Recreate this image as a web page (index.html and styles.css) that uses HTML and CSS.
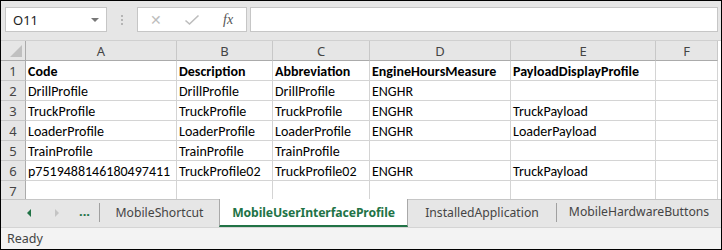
FILE: index.html
```html
<!DOCTYPE html>
<html lang="en">
<head>
  <meta charset="UTF-8">
  <title>MobileUserInterfaceProfile</title>
  <link rel="stylesheet" href="styles.css">
</head>
<body>
  <div class="window">
    <div class="formula-bar">
      <div class="name-box">
        <span>O11</span>
        <span class="caret"></span>
      </div>
      <div class="grip"><i></i><i></i><i></i></div>
      <div class="fx-buttons">
        <span class="fx-cancel">&#x2715;</span>
        <svg class="fx-enter" width="16" height="12" viewBox="0 0 16 12"><path d="M1.5 6.5 L5.5 10 L14.5 1.5" fill="none" stroke="#bdbdbd" stroke-width="1.6"/></svg>
        <span class="fx-label">fx</span>
      </div>
      <div class="formula-input"></div>
    </div>

    <div class="sheet">
      <div class="corner"><span class="corner-tri"></span></div>
      <div class="col-head">A</div>
      <div class="col-head">B</div>
      <div class="col-head">C</div>
      <div class="col-head">D</div>
      <div class="col-head">E</div>
      <div class="col-head">F</div>

      <div class="row-head">1</div>
      <div class="cell bold">Code</div>
      <div class="cell bold">Description</div>
      <div class="cell bold">Abbreviation</div>
      <div class="cell bold">EngineHoursMeasure</div>
      <div class="cell bold">PayloadDisplayProfile</div>
      <div class="cell"></div>

      <div class="row-head">2</div>
      <div class="cell">DrillProfile</div>
      <div class="cell">DrillProfile</div>
      <div class="cell">DrillProfile</div>
      <div class="cell">ENGHR</div>
      <div class="cell"></div>
      <div class="cell"></div>

      <div class="row-head">3</div>
      <div class="cell">TruckProfile</div>
      <div class="cell">TruckProfile</div>
      <div class="cell">TruckProfile</div>
      <div class="cell">ENGHR</div>
      <div class="cell">TruckPayload</div>
      <div class="cell"></div>

      <div class="row-head">4</div>
      <div class="cell">LoaderProfile</div>
      <div class="cell">LoaderProfile</div>
      <div class="cell">LoaderProfile</div>
      <div class="cell">ENGHR</div>
      <div class="cell">LoaderPayload</div>
      <div class="cell"></div>

      <div class="row-head">5</div>
      <div class="cell">TrainProfile</div>
      <div class="cell">TrainProfile</div>
      <div class="cell">TrainProfile</div>
      <div class="cell"></div>
      <div class="cell"></div>
      <div class="cell"></div>

      <div class="row-head">6</div>
      <div class="cell">p7519488146180497411</div>
      <div class="cell">TruckProfile02</div>
      <div class="cell">TruckProfile02</div>
      <div class="cell">ENGHR</div>
      <div class="cell">TruckPayload</div>
      <div class="cell"></div>

      <div class="row-head">7</div>
      <div class="cell"></div>
      <div class="cell"></div>
      <div class="cell"></div>
      <div class="cell"></div>
      <div class="cell"></div>
      <div class="cell"></div>
    </div>

    <div class="tab-bar">
      <div class="tab-nav">
        <span class="nav-prev"></span>
        <span class="nav-next"></span>
        <span class="nav-more">...</span>
      </div>
      <div class="tab">MobileShortcut</div>
      <div class="tab active">MobileUserInterfaceProfile</div>
      <div class="tab">InstalledApplication</div>
      <div class="tab last">MobileHardwareButtons</div>
    </div>

    <div class="status-bar">Ready</div>
  </div>
</body>
</html>
```

FILE: styles.css
```css
:root {
  --chrome: #e6e6e6;
  --status: #f3f3f3;
  --grid: #d4d4d4;
  --head-line: #ababab;
  --head-text: #444444;
  --green: #217346;
}

* {
  margin: 0;
  padding: 0;
  box-sizing: border-box;
}

body {
  width: 722px;
  height: 250px;
  overflow: hidden;
  font-family: "Noto Sans", "Open Sans", sans-serif;
  background: #ffffff;
}

.window {
  width: 722px;
  height: 250px;
  border: 1px solid #000000;
  background: var(--chrome);
  display: flex;
  flex-direction: column;
  overflow: hidden;
}

/* formula bar */

.formula-bar {
  height: 40px;
  display: flex;
  align-items: flex-start;
  padding: 6px 3px 0 4px;
  border-bottom: 1px solid #d0d0d0;
}

.name-box {
  width: 102px;
  height: 25px;
  background: #ffffff;
  border: 1px solid #c6c6c6;
  display: flex;
  align-items: center;
  justify-content: space-between;
  padding: 0 7px 0 7px;
  font-size: 13px;
  color: #222222;
}

.caret {
  width: 0;
  height: 0;
  border-left: 4px solid transparent;
  border-right: 4px solid transparent;
  border-top: 4px solid #777777;
}

.grip {
  width: 30px;
  height: 25px;
  display: flex;
  flex-direction: column;
  align-items: center;
  justify-content: center;
  gap: 2px;
}

.grip i {
  display: block;
  width: 2px;
  height: 2px;
  background: #b5b5b5;
}

.fx-buttons {
  width: 110px;
  height: 25px;
  background: #ffffff;
  border: 1px solid #c6c6c6;
  display: flex;
  align-items: center;
  padding: 0 0 0 12px;
}

.fx-cancel {
  width: 30px;
  color: #bdbdbd;
  font-size: 14px;
}

.fx-enter {
  margin: 0 0 0 4px;
}

.fx-label {
  margin-left: 23px;
  font-family: "Liberation Serif", serif;
  font-style: italic;
  font-size: 14px;
  color: #555555;
}

.formula-input {
  flex: 1;
  height: 25px;
  margin-left: 3px;
  background: #ffffff;
  border: 1px solid #c6c6c6;
}

/* grid */

.sheet {
  height: 158px;
  display: grid;
  grid-template-columns: 25px 151px 96px 97px 141px 145px 62px;
  grid-auto-rows: 20px;
  background: #ffffff;
  overflow: hidden;
}

.corner {
  background: var(--chrome);
  border-right: 1px solid var(--head-line);
  border-bottom: 1px solid var(--head-line);
  position: relative;
}

.corner-tri {
  position: absolute;
  right: 3px;
  bottom: 3px;
  width: 0;
  height: 0;
  border-left: 12px solid transparent;
  border-bottom: 12px solid #c0c0c0;
}

.col-head {
  background: var(--chrome);
  border-right: 1px solid #c8c8c8;
  border-bottom: 1px solid var(--head-line);
  color: var(--head-text);
  font-size: 13px;
  text-align: center;
  line-height: 20px;
}

.row-head {
  background: var(--chrome);
  border-right: 1px solid var(--head-line);
  border-bottom: 1px solid #c8c8c8;
  color: var(--head-text);
  font-size: 13px;
  text-align: center;
  line-height: 20px;
}

.cell {
  border-right: 1px solid var(--grid);
  border-bottom: 1px solid var(--grid);
  font-family: Calibri, Carlito, Lato, sans-serif;
  font-size: 14px;
  line-height: 16px;
  padding: 3px 0 0 2px;
  color: #000000;
  white-space: nowrap;
  overflow: visible;
}

.cell.bold {
  font-weight: 700;
}

/* sheet tabs */

.tab-bar {
  height: 28px;
  display: flex;
  align-items: stretch;
  border-top: 1px solid #c6c6c6;
  background: var(--chrome);
}

.tab-nav {
  width: 99px;
  display: flex;
  align-items: center;
  padding-left: 26px;
  border-right: 1px solid #a0a0a0;
  margin: 3px 0 5px 0;
}

.nav-prev {
  width: 0;
  height: 0;
  border-top: 4px solid transparent;
  border-bottom: 4px solid transparent;
  border-right: 4px solid var(--green);
}

.nav-next {
  margin-left: 24px;
  width: 0;
  height: 0;
  border-top: 4px solid transparent;
  border-bottom: 4px solid transparent;
  border-left: 4px solid #c4c4c4;
}

.nav-more {
  margin-left: 20px;
  color: var(--green);
  font-weight: 700;
  font-size: 13px;
  line-height: 13px;
  padding-bottom: 2px;
}

.tab {
  display: flex;
  align-items: center;
  justify-content: center;
  font-size: 12.2px;
  color: var(--head-text);
  padding-bottom: 2px;
  width: 119px;
}

.tab.active {
  width: 189px;
  margin-top: -1px;
  background: #ffffff;
  border-left: 1px solid #a9a9a9;
  border-right: 1px solid #a9a9a9;
  border-bottom: 2px solid var(--green);
  color: var(--green);
  font-size: 12.2px;
  font-weight: 700;
  letter-spacing: -0.1px;
  padding-bottom: 0;
}

.tab + .tab.last {
  border-left: 1px solid #a0a0a0;
  margin: 3px 0 5px 0;
  flex: 1;
  width: auto;
}

.tab.active + .tab {
  width: 148px;
}

/* status bar */

.status-bar {
  flex: 1;
  background: var(--status);
  border-top: 1px solid #d4d4d4;
  font-size: 12.5px;
  color: var(--head-text);
  padding-left: 6px;
  display: flex;
  align-items: center;
}
```
